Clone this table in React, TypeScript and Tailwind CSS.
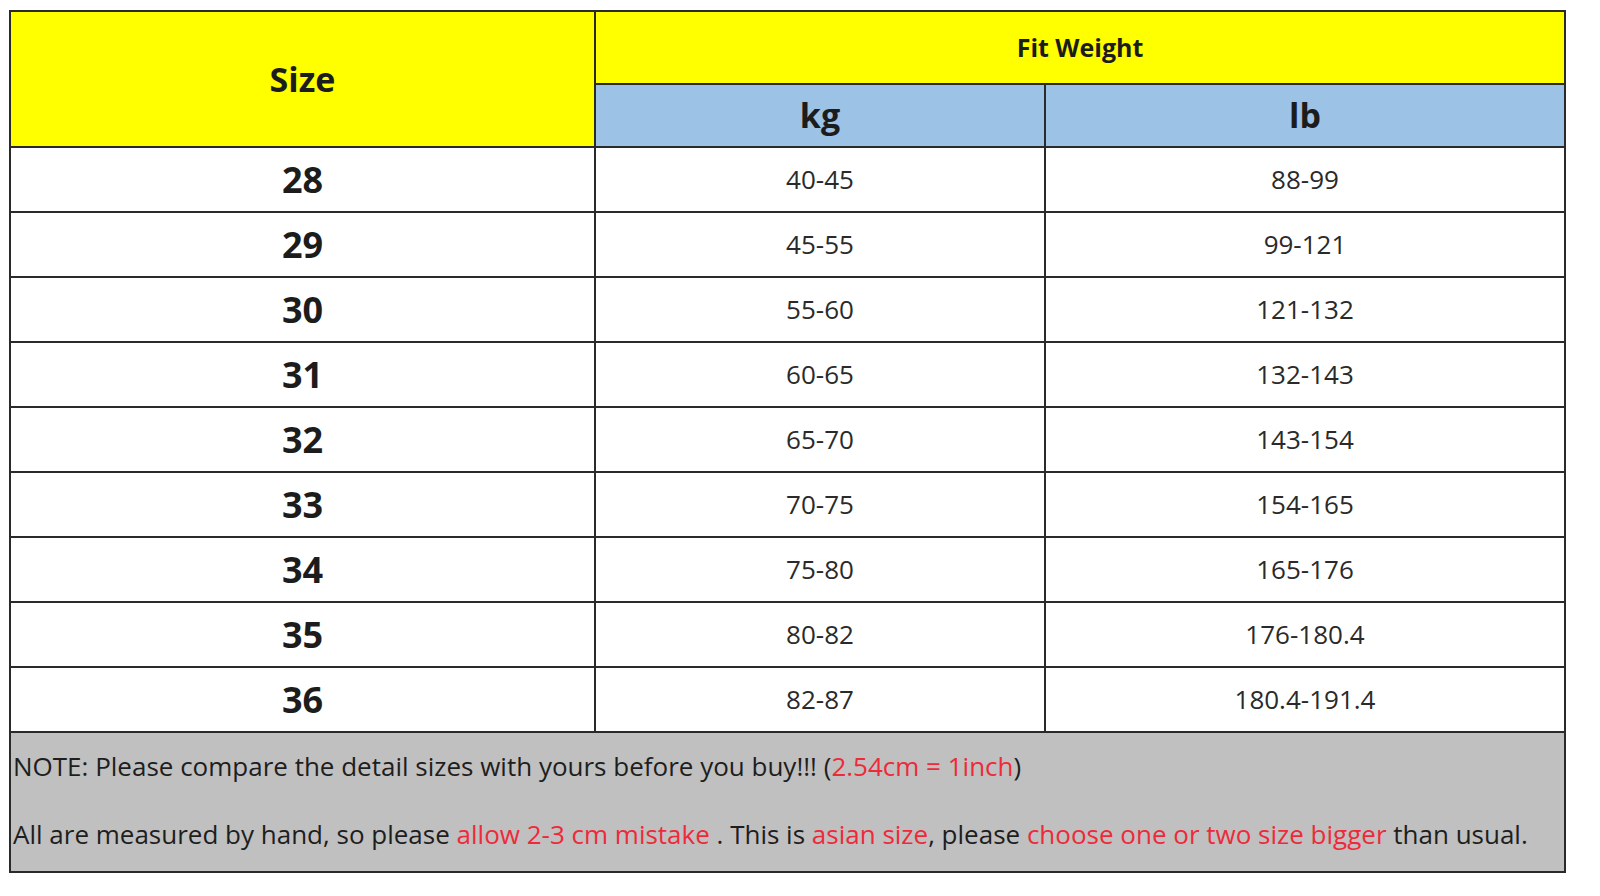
const rows: [string, string, string][] = [
  ['28', '40-45', '88-99'],
  ['29', '45-55', '99-121'],
  ['30', '55-60', '121-132'],
  ['31', '60-65', '132-143'],
  ['32', '65-70', '143-154'],
  ['33', '70-75', '154-165'],
  ['34', '75-80', '165-176'],
  ['35', '80-82', '176-180.4'],
  ['36', '82-87', '180.4-191.4'],
]

const cell = 'border-2 border-[#2a2a2a] text-center align-middle p-0'

export default function App() {
  return (
    <div className="min-h-[896px] w-[1600px] bg-white pt-[10px] pl-[9px] text-[#1c1c1c] [font-family:'Open_Sans','Noto_Sans',sans-serif]">
      <table className="table-fixed border-collapse w-[1555px]">
        <colgroup>
          <col className="w-[585px]" />
          <col className="w-[450px]" />
          <col className="w-[520px]" />
        </colgroup>
        <tbody>
          <tr className="h-[73px]">
            <td rowSpan={2} className={`${cell} bg-[#ffff00] text-[34px] font-bold`}>
              Size
            </td>
            <td colSpan={2} className={`${cell} bg-[#ffff00] text-[25px] font-bold`}>
              Fit Weight
            </td>
          </tr>
          <tr className="h-[63px]">
            <td className={`${cell} bg-[#9cc2e6] text-[34px] font-bold`}>kg</td>
            <td className={`${cell} bg-[#9cc2e6] text-[34px] font-bold`}>lb</td>
          </tr>
          {rows.map(([size, kg, lb]) => (
            <tr key={size} className="h-[65px]">
              <td className={`${cell} text-[36px] font-bold`}>{size}</td>
              <td className={`${cell} text-[26px] text-[#2a2a2a]`}>{kg}</td>
              <td className={`${cell} text-[26px] text-[#2a2a2a]`}>{lb}</td>
            </tr>
          ))}
          <tr className="h-[140px]">
            <td colSpan={3} className="border-2 border-[#2a2a2a] bg-[#c0c0c0] p-0 align-top text-left">
              <div className="flex flex-col gap-[36px] pt-[17px] pl-[2px] text-[26px] leading-[32px] text-[#1e1e1e]">
                <p>
                  NOTE: Please compare the detail sizes with yours before you buy!!! (
                  <span className="text-[#ee2a3a]">2.54cm = 1inch</span>)
                </p>
                <p>
                  All are measured by hand, so please{' '}
                  <span className="text-[#ee2a3a]">allow 2-3 cm mistake</span> . This is{' '}
                  <span className="text-[#ee2a3a]">asian size</span>, please{' '}
                  <span className="text-[#ee2a3a]">choose one or two size bigger</span> than usual.
                </p>
              </div>
            </td>
          </tr>
        </tbody>
      </table>
    </div>
  )
}
